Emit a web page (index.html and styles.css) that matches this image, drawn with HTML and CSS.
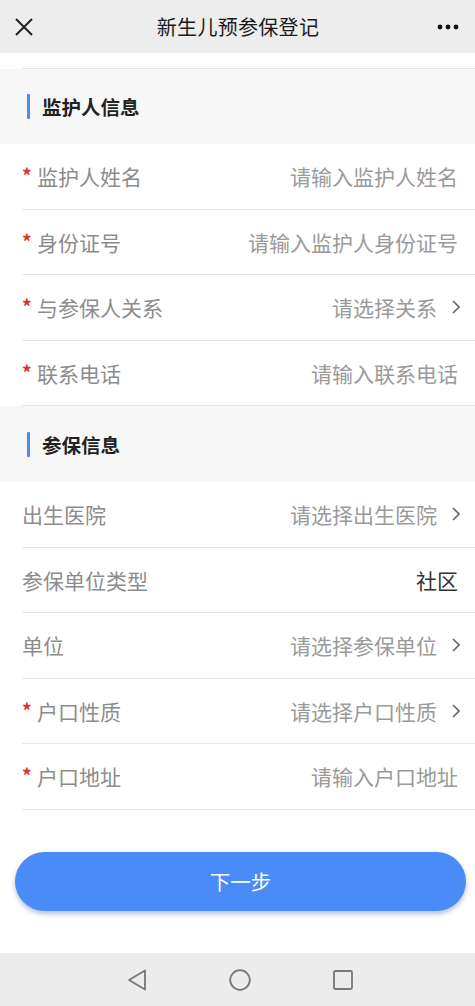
FILE: index.html
```html
<!DOCTYPE html>
<html lang="zh-CN">
<head>
<meta charset="utf-8">
<title>新生儿预参保登记</title>
<link rel="stylesheet" href="styles.css">
</head>
<body>
<div class="page">
  <header class="topbar">
    <svg class="close" width="18" height="18" viewBox="0 0 18 18"><path d="M1 1 L17 17 M17 1 L1 17" stroke="#222" stroke-width="2" fill="none"/></svg>
    <div class="title">新生儿预参保登记</div>
    <svg class="more" width="22" height="6" viewBox="0 0 22 6"><circle cx="3" cy="3" r="2.4" fill="#111"/><circle cx="11" cy="3" r="2.4" fill="#111"/><circle cx="19" cy="3" r="2.4" fill="#111"/></svg>
  </header>

  <div class="gap"></div>

  <div class="section-head"><span class="bar"></span><span>监护人信息</span></div>
  <div class="row"><div class="label"><span class="req">*</span>监护人姓名</div><div class="value ph">请输入监护人姓名</div></div>
  <div class="row"><div class="label"><span class="req">*</span>身份证号</div><div class="value ph">请输入监护人身份证号</div></div>
  <div class="row"><div class="label"><span class="req">*</span>与参保人关系</div><div class="value ph">请选择关系<svg class="chev" width="8" height="14" viewBox="0 0 8 14"><path d="M1 1 L7 7 L1 13" stroke="#666" stroke-width="1.6" fill="none"/></svg></div></div>
  <div class="row"><div class="label"><span class="req">*</span>联系电话</div><div class="value ph">请输入联系电话</div></div>

  <div class="section-head s2"><span class="bar"></span><span>参保信息</span></div>
  <div class="row"><div class="label">出生医院</div><div class="value ph">请选择出生医院<svg class="chev" width="8" height="14" viewBox="0 0 8 14"><path d="M1 1 L7 7 L1 13" stroke="#666" stroke-width="1.6" fill="none"/></svg></div></div>
  <div class="row"><div class="label">参保单位类型</div><div class="value dark">社区</div></div>
  <div class="row"><div class="label">单位</div><div class="value ph">请选择参保单位<svg class="chev" width="8" height="14" viewBox="0 0 8 14"><path d="M1 1 L7 7 L1 13" stroke="#666" stroke-width="1.6" fill="none"/></svg></div></div>
  <div class="row"><div class="label"><span class="req">*</span>户口性质</div><div class="value ph">请选择户口性质<svg class="chev" width="8" height="14" viewBox="0 0 8 14"><path d="M1 1 L7 7 L1 13" stroke="#666" stroke-width="1.6" fill="none"/></svg></div></div>
  <div class="row"><div class="label"><span class="req">*</span>户口地址</div><div class="value ph">请输入户口地址</div></div>

  <div class="btn-wrap"><button class="btn">下一步</button></div>

  <nav class="sysnav">
    <svg width="20" height="22" viewBox="0 0 20 22"><path d="M18 1.5 L18 20.5 L2 11 Z" stroke="#777" stroke-width="1.8" fill="none" stroke-linejoin="round"/></svg>
    <svg width="22" height="22" viewBox="0 0 22 22"><circle cx="11" cy="11" r="9.8" stroke="#777" stroke-width="1.8" fill="none"/></svg>
    <svg width="20" height="20" viewBox="0 0 20 20"><rect x="1" y="1" width="18" height="18" rx="1.5" stroke="#777" stroke-width="1.8" fill="none"/></svg>
  </nav>
</div>
</body>
</html>
```

FILE: styles.css
```css
* { box-sizing: border-box; }
html, body { margin: 0; padding: 0; }
body {
  font-family: "Noto Sans CJK SC", "Noto Sans", sans-serif;
  background: #fff;
}
.page {
  width: 475px;
  height: 1006px;
  display: flex;
  flex-direction: column;
  overflow: hidden;
}
.topbar {
  height: 53px;
  flex: none;
  background: #ededed;
  display: flex;
  align-items: center;
  justify-content: space-between;
  padding: 0 16px 0 15px;
}
.title {
  font-size: 20px;
  color: #1a1a1a;
  letter-spacing: 0.3px;
  margin-left: 6px;
}
.more { margin-top: 1px; }
.gap {
  height: 16px;
  flex: none;
  margin-left: 22px;
  border-bottom: 1px solid #e6e6e6;
}
.section-head {
  height: 75px;
  flex: none;
  background: #f7f7f7;
  display: flex;
  align-items: center;
  padding-left: 27px;
  font-size: 19.5px;
  font-weight: 700;
  color: #222;
}
.section-head.s2 { height: 76px; }
.bar {
  width: 3px;
  height: 25px;
  background: #4a8cf0;
  border-radius: 1px;
  margin-right: 12px;
}
.row {
  height: 65.5px;
  flex: none;
  margin-left: 22px;
  border-bottom: 1px solid #e6e6e6;
  display: flex;
  align-items: center;
  justify-content: space-between;
  padding-right: 17px;
  font-size: 21px;
}
.label {
  color: #8c8c8c;
  display: flex;
  align-items: center;
}
.req {
  color: #e0302a;
  font-size: 19px;
  font-weight: 700;
  width: 15px;
  margin-top: -3px;
}
.value {
  display: flex;
  align-items: center;
}
.ph { color: #9a9a9a; }
.dark { color: #333; }
.chev { margin-left: 15px; margin-right: -2px; }
.btn-wrap {
  flex: none;
  padding: 42px 9px 0 15px;
}
.btn {
  width: 100%;
  height: 59px;
  border: none;
  border-radius: 30px;
  background: #4a8cf7;
  color: #fff;
  font-family: "Noto Sans CJK SC", sans-serif;
  font-size: 20.5px;
  box-shadow: 0 3px 5px rgba(40, 80, 150, 0.35);
}
.sysnav {
  margin-top: auto;
  height: 53px;
  flex: none;
  background: #ececec;
  display: flex;
  align-items: center;
  justify-content: center;
  gap: 82px;
  padding-left: 4px;
}
```
